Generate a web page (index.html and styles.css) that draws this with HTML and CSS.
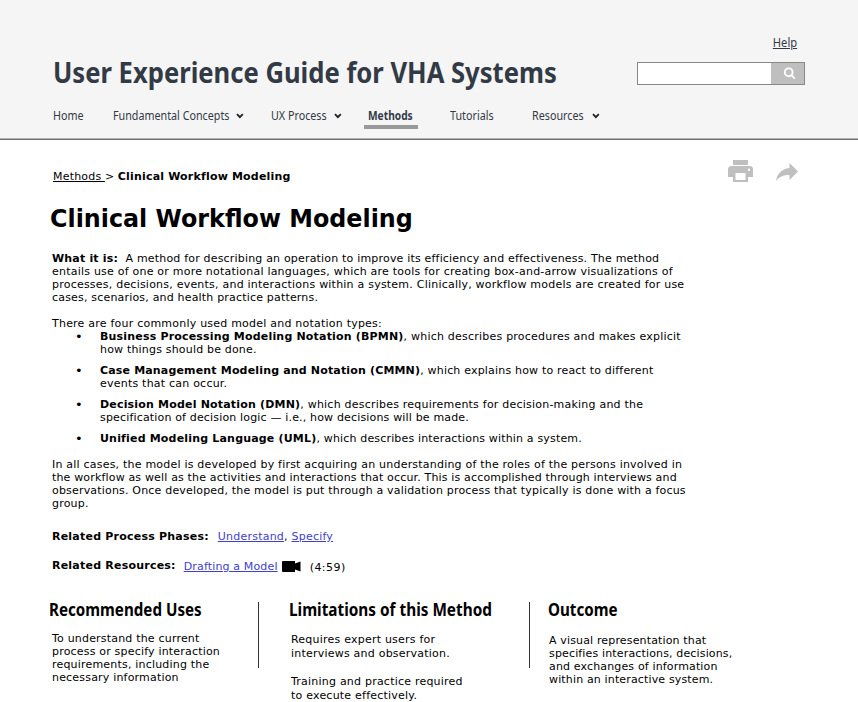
FILE: index.html
```html
<!DOCTYPE html>
<html lang="en">
<head>
<meta charset="utf-8">
<title>Clinical Workflow Modeling</title>
<link rel="stylesheet" href="styles.css">
</head>
<body>
<header class="site-header">
  <div class="help-row"><a class="help">Help</a></div>
  <div class="brand-row">
    <div class="brand">User Experience Guide for VHA Systems</div>
    <div class="search">
      <div class="search-field"></div>
      <div class="search-button"><svg width="14" height="14" viewBox="0 0 14 14"><circle cx="5.7" cy="5.3" r="3.900"/><path d="M8.600 8.400l3.200 3.200"/></svg></div>
    </div>
  </div>
  <nav class="nav">
    <a><span class="label">Home</span></a>
    <a><span class="label label-fundamental">Fundamental Concepts</span><svg class="chev" width="8" height="6" viewBox="0 0 8 6"><path d="M1 1.200l2.900 2.900 2.900-2.900"/></svg></a>
    <a><span class="label label-process">UX Process</span><svg class="chev" width="8" height="6" viewBox="0 0 8 6"><path d="M1 1.200l2.900 2.900 2.900-2.900"/></svg></a>
    <a class="active"><span class="label">Methods</span></a>
    <a><span class="label">Tutorials</span></a>
    <a><span class="label label-resources">Resources</span><svg class="chev" width="8" height="6" viewBox="0 0 8 6"><path d="M1 1.200l2.900 2.900 2.900-2.900"/></svg></a>
  </nav>
</header>
<main class="page">
  <div class="crumb-row">
    <div class="crumbs"><a>Methods&nbsp;</a>&gt; <b>Clinical Workflow Modeling</b></div>
    <div class="tools">
      <svg width="25" height="23" viewBox="0 0 25 23"><path d="M5 0h15v5H5z"/><path fill-rule="evenodd" d="M3.500 6h18A3.500 3.500 0 0 1 25 9.500V17h-5v5H5v-5H0V9.500A3.500 3.500 0 0 1 3.500 6zM7.500 13v7h10v-7zM21 8.500a1.200 1.200 0 1 0 0 2.400 1.200 1.200 0 0 0 0-2.400z"/></svg>
      <svg width="22" height="18" viewBox="0 0 22 18"><path d="M13.500 0L22 8.500 13.500 17v-5C7.500 12 3 13.800 0 18 1.200 11.500 5 6 13.500 5z"/></svg>
    </div>
  </div>
  <h1>Clinical Workflow Modeling</h1>
  <p class="intro"><b class="tight">What it is:</b>&nbsp; <span class="tight">A method for describing an operation to improve its efficiency and effectiveness. The method</span><br>
    entails use of one or more notational languages, which are tools for creating box-and-arrow visualizations of<br>
    processes, decisions, events, and interactions within a system. Clinically, workflow models are created for use<br>
    <span class="tight">cases, scenarios, and health practice patterns.</span></p>
  <p class="lead">There are four commonly used model and notation types:</p>
  <ul>
    <li><div><b class="tight">Business Processing Modeling Notation (BPMN)</b>, which describes procedures and makes explicit<br><span class="tight">how things should be done.</span></div></li>
    <li><div><b class="tighter">Case Management Modeling and Notation (CMMN)</b><span class="tight">, which explains how to react to different</span><br>events that can occur.</div></li>
    <li><div><b class="tight">Decision Model Notation (DMN)</b><span>, which describes requirements for decision-making and the</span><br><span class="tighter">specification of decision logic — i.e., how decisions will be made.</span></div></li>
    <li><div><b class="tight">Unified Modeling Language (UML)</b><span class="tighter">, which describes interactions within a system.</span></div></li>
  </ul>
  <p class="cases">In all cases, the model is developed by first acquiring an understanding of the roles of the persons involved in<br><span class="tighter">the workflow as well as the activities and interactions that occur. This is accomplished through interviews and</span><br><span class="tight">observations. Once developed, the model is put through a validation process that typically is done with a focus</span><br>group.</p>
  <p class="phases"><b>Related Process Phases:</b><span><a>Understand</a>, <a>Specify</a></span></p>
  <div class="resources"><b>Related Resources:</b><a>Drafting a Model</a><svg width="19" height="13" viewBox="0 0 19 13"><path d="M0 2Q0 1 1 1h12v2.500L18.500 1.500v10L13 9.500V12H1q-1 0-1-1z"/></svg><span class="duration">(4:59)</span></div>
  <section class="columns">
    <article class="uses"><h2>Recommended Uses</h2><p>To understand the current<br>process or specify interaction<br>requirements, including the<br>necessary information</p></article>
    <article class="limits"><h2>Limitations of this Method</h2><p>Requires expert users for<br>interviews and observation.<br><br>Training and practice required<br>to execute effectively.</p></article>
    <article class="outcome"><h2>Outcome</h2><p>A visual representation that<br>specifies interactions, decisions,<br>and exchanges of information<br>within an interactive system.</p></article>
  </section>
</main>
</body>
</html>
```
FILE: styles.css
```css
*, ::before, ::after { box-sizing: border-box; }
body { margin: 0; width: 858px; height: 702px; overflow: hidden; background: #fff; color: #000; font: 11px/13px "DejaVu Sans", sans-serif; letter-spacing: .22px; white-space: nowrap; }
h1, h2, p, ul { margin: 0; padding: 0; }
.tight { letter-spacing: .185px; }
.tighter { letter-spacing: .165px; }
.site-header { height: 140px; padding: 35px 53px 0; background: #f5f5f5; border-bottom: 1px solid #6e6e6e; box-shadow: inset 0 -1px #b4b4b4; font-family: "Noto Sans", sans-serif; letter-spacing: 0; color: #323a45; }
.help-row { display: flex; justify-content: flex-end; height: 26px; padding-right: 8px; font-size: 12px; line-height: 16px; text-decoration: underline; }
.help { transform: scaleX(.93); transform-origin: right; }
.brand-row { display: flex; justify-content: space-between; height: 46px; }
.brand { width: 504px; font-size: 29px; line-height: 21px; height: 24px; font-weight: 700; transform: scaleX(.883); transform-origin: left; }
.search { display: flex; width: 168px; height: 23px; border: 1px solid #888; background: #fff; margin-top: 1px; }
.search-field { flex: 1; }
.search-button { width: 33px; background: #bfbfbf; padding: 4px 0 0 12px; }
.search-button svg { fill: none; stroke: #fff; stroke-width: 1.900; display: block; }
.nav { display: grid; grid-template-columns: 60px 157.500px 98px 81.500px 82px 80px; font-size: 12px; line-height: 18px; }
.nav a { display: flex; flex-wrap: wrap; align-items: center; align-content: flex-start; }
.label { transform: scaleX(.895); transform-origin: left; }
.label-fundamental { width: 123px; }
.label-process { width: 63px; }
.label-resources { width: 60px; }
.active { font-weight: 700; }
.active .label { transform: scaleX(.85); margin-left: -.5px; }
.active::after { content: ""; flex: none; width: 54px; height: 4px; margin: 0 0 0 -4.500px; background: #999; }
.chev { fill: none; stroke: #222; stroke-width: 1.900; }
.crumb-row { display: flex; justify-content: space-between; height: 64px; padding: 20px 60px 0 1px; }
.crumbs { padding-top: 10px; letter-spacing: .2px; word-spacing: -.2px; }
.crumbs a { text-decoration: underline; }
.tools { display: flex; gap: 23px; align-items: center; height: 23px; fill: #bfbfbf; }
.page { padding-left: 52px; }
h1 { font-size: 25.500px; line-height: 28px; letter-spacing: 0; margin-left: -2px; transform: scaleX(.934); transform-origin: left; }
.intro { margin-top: 20px; }
.lead { margin-top: 13px; }
ul { list-style: none; }
li { display: flex; margin-bottom: 8px; }
li::before { content: "•"; flex: none; width: 48px; padding-left: 23px; font-size: 13px; }
.cases { margin-top: 13px; letter-spacing: .21px; }
.phases { display: flex; gap: 9px; margin-top: 20px; }
.resources { margin-top: 16px; display: flex; }
.phases a, .resources a { color: #4040d0; text-decoration: underline; }
.resources a { margin: 1px 4px 0 8px; letter-spacing: .15px; }
.resources svg { margin-top: 1px; }
.duration { margin: 2px 0 0 9px; letter-spacing: .45px; }
.columns { display: grid; grid-template-columns: 206px 271px 220px; margin-top: 28px; }
.columns article { height: 98px; }
.uses p { letter-spacing: .19px; }
h2 { font: 700 17px/16px "Noto Sans", sans-serif; letter-spacing: 0; height: 18px; margin: 0 0 12px -3px; transform: scaleX(.892); transform-origin: left; }
.limits, .outcome { background: linear-gradient(#333, #333) 0 0 / 1px 66px no-repeat; }
.limits { padding-left: 33px; }
.limits p { line-height: 14px; }
.limits h2 { margin: 0 0 13px -2px; transform: scaleX(.902); }
.outcome { padding-left: 20px; }
.outcome h2 { margin: 0 0 14px -1px; }
.outcome p { letter-spacing: .15px; }
```
